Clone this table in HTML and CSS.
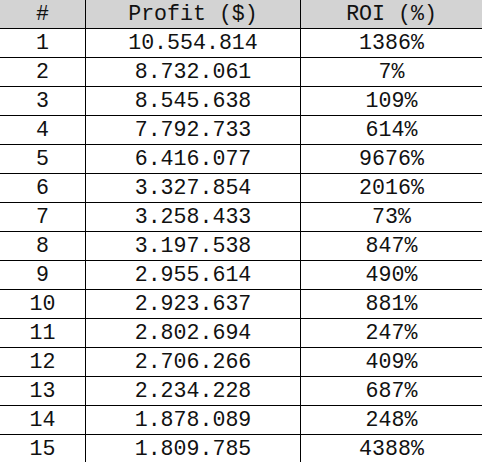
FILE: index.html
```html
<!DOCTYPE html>
<html>
<head>
<meta charset="utf-8">
<link rel="stylesheet" href="styles.css">
</head>
<body>
<table class="data">
  <colgroup>
    <col class="c-rank">
    <col class="c-profit">
    <col class="c-roi">
  </colgroup>
  <thead>
    <tr><th>#</th><th>Profit ($)</th><th>ROI (%)</th></tr>
  </thead>
  <tbody>
    <tr><td>1</td><td>10.554.814</td><td>1386%</td></tr>
    <tr><td>2</td><td>8.732.061</td><td>7%</td></tr>
    <tr><td>3</td><td>8.545.638</td><td>109%</td></tr>
    <tr><td>4</td><td>7.792.733</td><td>614%</td></tr>
    <tr><td>5</td><td>6.416.077</td><td>9676%</td></tr>
    <tr><td>6</td><td>3.327.854</td><td>2016%</td></tr>
    <tr><td>7</td><td>3.258.433</td><td>73%</td></tr>
    <tr><td>8</td><td>3.197.538</td><td>847%</td></tr>
    <tr><td>9</td><td>2.955.614</td><td>490%</td></tr>
    <tr><td>10</td><td>2.923.637</td><td>881%</td></tr>
    <tr><td>11</td><td>2.802.694</td><td>247%</td></tr>
    <tr><td>12</td><td>2.706.266</td><td>409%</td></tr>
    <tr><td>13</td><td>2.234.228</td><td>687%</td></tr>
    <tr><td>14</td><td>1.878.089</td><td>248%</td></tr>
    <tr><td>15</td><td>1.809.785</td><td>4388%</td></tr>
  </tbody>
</table>
</body>
</html>
```
FILE: styles.css
```css
html, body {
  margin: 0;
  padding: 0;
  background: #ffffff;
}
.data {
  border-collapse: separate;
  border-spacing: 0;
  table-layout: fixed;
  width: 482px;
  font-family: "Liberation Mono", "DejaVu Sans Mono", monospace;
  font-size: 21.6px;
  color: #111111;
}
.c-rank { width: 86px; }
.c-profit { width: 215px; }
.c-roi { width: 181px; }
.data th,
.data td {
  height: 28px;
  padding: 0;
  text-align: center;
  vertical-align: middle;
  font-weight: normal;
  line-height: 28px;
  border-right: 1px solid #000;
  border-bottom: 1px solid #000;
  white-space: nowrap;
}
.data th:last-child,
.data td:last-child {
  border-right: none;
}
.data th {
  background: #d3d3d3;
}
```
